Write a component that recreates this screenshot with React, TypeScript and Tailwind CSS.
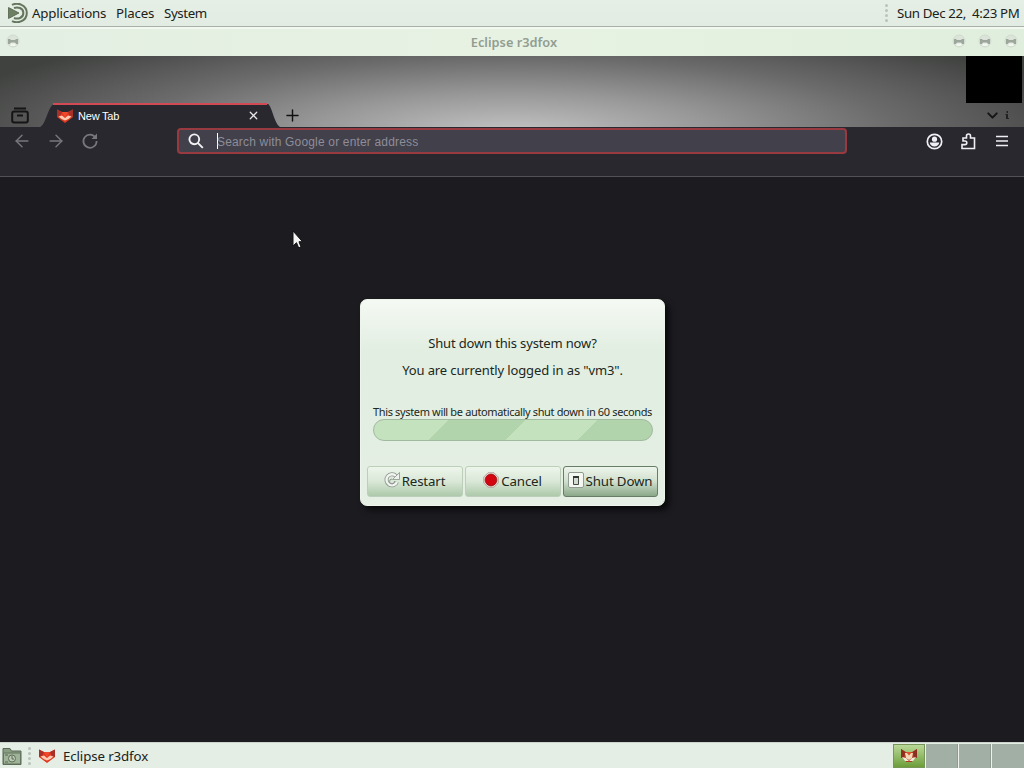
import React from 'react';
import { Plus, X, ChevronDown, ArrowLeft, ArrowRight } from 'lucide-react';

const FoxIcon = ({ size = 16 }: { size?: number }) => (
  <svg width={size} height={size} viewBox="0 0 16 16" className="shrink-0">
    <path d="M0 1.500l5 2.500h6l5-2.500v7.500L8 15 0 9z" fill="#e0391f" />
    <path d="M0 1.500l5 2.500-2 4-3 1zM16 1.500l-5 2.500 2 4 3 1z" fill="#a83028" />
    <path d="M1.500 8.500L5 7.500l3 2.500 3-2.500 3.500 1-3 2.500L8 12.500 4.500 11z" fill="#ffc9b0" />
    <path d="M5 4h6L8 9.500z" fill="#f0492c" />
  </svg>
);

const TrayFoxIcon = () => (
  <svg width="18" height="16" viewBox="0 0 18 16" className="shrink-0">
    <path d="M1 1l5 3h6l5-3v8l-4 2-1 3H6l-1-3-4-2z" fill="#b23a24" />
    <path d="M1 1l4 3-1 5-3 1zM17 1l-4 3 1 5 3 1z" fill="#8c2f22" />
    <path d="M5 5h8l-1 5-3 2-3-2z" fill="#f1d9b8" />
    <path d="M2 9l4 1 3 3 3-3 4-1-3 4H5z" fill="#f4eadb" />
    <path d="M6 4h6l-3 3.500z" fill="#d9532e" />
  </svg>
);

const MateLogo = () => (
  <svg width="20" height="20" viewBox="0 0 20 20" fill="none" className="shrink-0">
    <path d="M4 1.900C7 .4 10.500.5 13.500 1.800a9 9 0 0 1 0 16.400C10.500 19.500 7 19.600 4 18.100" stroke="#64765d" strokeWidth="2" />
    <path d="M6 5C8 4.200 10 4.200 12 5a5.400 5.400 0 0 1 0 10C10 15.800 8 15.800 6 15" stroke="#64765d" strokeWidth="2" />
    <path d="M.5 4.500L11 10 .5 15.500z" fill="#6d8062" stroke="#50614a" strokeWidth=".8" />
  </svg>
);

const WindowDot = () => (
  <svg width="14" height="14" viewBox="0 0 14 14">
    <circle cx="7" cy="7" r="6" fill="#dce4da" stroke="#d0dace" />
    <path d="M2 5h2l1 1h4l1-1h2v5h-2L9 8.500H5L4 10H2z" fill="#9ca69b" />
    <path d="M4.500 9.500h5V12h-5z" fill="#f1f6ef" />
  </svg>
);

const Grip = () => (
  <div className="flex w-1 flex-col gap-[2px]">
    {[0, 1, 2, 3].map(i => <span key={i} className="h-[3px] w-[3px] rounded-full bg-[#b9c3b9]" />)}
  </div>
);

const TopPanel = () => (
  <div className="flex h-[27px] items-center border-b border-[#a7b1a6] bg-linear-to-b from-[#e5efe5] to-[#e3ece2] pl-2 text-[13.3px] leading-none text-[#1b211b]">
    <MateLogo />
    <span className="ml-1 w-[84px] pt-0.5 tracking-[-0.18px]">Applications</span>
    <span className="w-[48px] pt-0.5 tracking-[-0.15px]">Places</span>
    <span className="pt-0.5 tracking-[-0.4px]">System</span>
    <div className="ml-auto flex items-center gap-2 pr-1">
      <Grip />
      <span className="w-[123px] whitespace-nowrap pt-0.5 tracking-[-0.37px]">Sun Dec 22,&nbsp; 4:23 PM</span>
    </div>
  </div>
);

const TitleBar = () => (
  <div className="flex h-[29px] items-center border-t-2 border-[#f2f8f0] bg-linear-to-r from-[#e3efe2] via-[#e7f2e3] to-[#e0efdd] px-1.5">
    <div className="flex w-[70px] pb-[3px]"><WindowDot /></div>
    <div className="flex-1 text-center text-[12.8px] font-semibold leading-none text-[#929d91]">Eclipse r3dfox</div>
    <div className="flex w-[66px] justify-between pb-[3px]">
      <WindowDot />
      <WindowDot />
      <WindowDot />
    </div>
  </div>
);

const TabStrip = () => (
  <div className="flex h-[71px] justify-between bg-[radial-gradient(ellipse_590px_115px_at_50%_108%,#c4c4c4_0%,#989898_34%,#6b6b6b_65%,#404240_100%)]">
    <div className="flex items-end">
      <div className="flex h-6 w-10 items-center pl-[11px]">
        <svg width="18" height="18" viewBox="0 0 18 18" fill="none" stroke="#141514" strokeWidth="2">
          <path d="M3 2.500h12M6 9.500h6" />
          <rect x="1.200" y="5.500" width="15.600" height="11" rx="2" />
        </svg>
      </div>
      <div className="relative flex h-6 w-[240px] items-center">
        <svg className="absolute inset-0" width="240" height="24" viewBox="0 0 240 24">
          <path d="M0 24C6 22 8 3 14 1h214c4 2 6 19 12 23z" fill="#29282f" />
          <path d="M13 1h214" stroke="#d24b54" strokeWidth="2" />
        </svg>
        <div className="relative flex w-full items-center pl-[17px] pr-[20px] pt-px font-['Liberation_Sans',sans-serif] text-[11px] text-white">
          <FoxIcon />
          <span className="ml-[5px] pt-px leading-none tracking-[-0.2px]">New Tab</span>
          <X className="ml-auto" size={13} strokeWidth={2.300} color="#e6e6ea" />
        </div>
      </div>
      <div className="flex h-6 items-center pl-[3px] pt-px"><Plus size={19} strokeWidth={1.800} color="#111" /></div>
    </div>
    <div className="mr-0.5 w-14">
      <div className="h-[47px] bg-black" />
      <div className="flex h-6 items-center justify-end gap-[4px] pr-3">
        <ChevronDown size={17} strokeWidth={2.800} color="#151515" />
        <svg width="5" height="10" viewBox="0 0 5 10"><path d="M1.500 1h1.500v2H1.500zM.5 4h2.500v4h1v1h-3V5H.5z" fill="#222" /></svg>
      </div>
    </div>
  </div>
);

const Toolbar = () => (
  <div className="flex h-[50px] items-start border-b border-[#515158] bg-[#29282f]">
    <div className="flex h-7 w-[177px] items-center gap-[14px] pl-3 text-[#77777d]">
      <ArrowLeft size={20} strokeWidth={1.700} />
      <ArrowRight size={20} strokeWidth={1.700} />
      <svg width="20" height="20" viewBox="0 0 20 20" fill="none" stroke="currentColor" strokeWidth="1.700">
        <path d="M15.500 6.500A6.600 6.600 0 1 0 16.600 10" />
        <path d="M17 2.500V8h-5.500z" fill="currentColor" stroke="none" />
      </svg>
    </div>
    <div className="mt-px flex h-[26px] w-[670px] items-center rounded-[4px] border-2 border-[#983a40] bg-[#41404b] pl-[9px]">
      <svg width="16" height="16" viewBox="0 0 16 16" fill="none" stroke="#f2f2f5" strokeWidth="1.900">
        <circle cx="6.300" cy="6.300" r="4.900" />
        <path d="M9.800 9.800l5 5" />
      </svg>
      <span className="ml-[13px] h-4 w-px bg-white" />
      <span className="-ml-px pt-0.5 font-['Liberation_Sans',sans-serif] text-[12px] leading-none tracking-[0.17px] text-[#8e8d98]">Search with Google or enter address</span>
    </div>
    <div className="ml-auto flex h-7 items-center gap-[17px] pr-[13px] text-[#f0f0f4]">
      <svg width="17" height="17" viewBox="0 0 17 17">
        <circle cx="8.500" cy="8.500" r="7.200" fill="none" stroke="currentColor" strokeWidth="1.700" />
        <circle cx="8.500" cy="6.200" r="2.600" fill="currentColor" />
        <path d="M3.800 9.500h9.400c0 2.200-2 4-4.700 4s-4.700-1.800-4.700-4z" fill="currentColor" />
      </svg>
      <svg width="17" height="17" viewBox="0 0 17 17" fill="none" stroke="currentColor" strokeWidth="1.600">
        <path d="M2 15.500h12.500V5h-4V3a2 2 0 0 0-4 0v2H3v3h2a1.800 1.800 0 0 1 0 3.600H2z" />
      </svg>
      <svg width="17" height="17" viewBox="0 0 17 17" stroke="currentColor" strokeWidth="1.600">
        <path d="M2 3.500h12M2 8h12M2 12.500h12" />
      </svg>
    </div>
  </div>
);

const RestartIcon = () => (
  <svg width="16" height="16" viewBox="0 0 16 16" fill="none" className="-mt-[3px] shrink-0">
    <path d="M12 4A5.500 5.500 0 1 0 13 10" stroke="#899389" strokeWidth="4" />
    <path d="M12 4A5.500 5.500 0 1 0 13 10" stroke="#f3f5f2" strokeWidth="2.400" />
    <path d="M15.500.5v7H8.500z" fill="#edf0ec" stroke="#899389" strokeWidth=".8" />
    <path d="M10.500 9a2.500 2.500 0 1 1-2.500-2" stroke="#929b92" />
  </svg>
);

const CancelIcon = () => (
  <svg width="16" height="16" viewBox="0 0 16 16" className="-mt-[3px] shrink-0">
    <path d="M5 .8h6L15.200 5v6L11 15.200H5L.8 11V5z" fill="#f5e7e3" stroke="#b39f99" />
    <circle cx="8" cy="8" r="5.900" fill="#d3060f" stroke="#8e1715" strokeWidth=".8" />
  </svg>
);

const ShutDownIcon = () => (
  <svg width="16" height="16" viewBox="0 0 16 16" className="-mt-[3px] shrink-0">
    <rect x=".5" y=".5" width="15" height="15" rx="1.500" fill="#f5f7f3" stroke="#8f9c8f" />
    <path d="M5.500 4.500h5v8h-5z" fill="#d5dbd2" stroke="#444b43" />
    <path d="M5 4h6v2H5z" fill="#323832" />
  </svg>
);

const buttons = [
  { label: 'Restart', icon: <RestartIcon />, focused: false },
  { label: 'Cancel', icon: <CancelIcon />, focused: false },
  { label: 'Shut Down', icon: <ShutDownIcon />, focused: true },
];

const ShutdownDialog = () => (
  <div className="absolute left-[360px] top-[299px] flex h-[207px] w-[305px] flex-col items-center rounded-[7px] border border-[#edf5eb] bg-linear-to-b from-[#f5f9f3] via-[#e2eee2] via-25% to-[#e5efe3] text-[#202720] shadow-[4px_4px_6px_0px_rgba(0,0,0,0.7)]">
    <p className="mt-[34px] text-[13px] leading-[18px] tracking-[-0.15px]">Shut down this system now?</p>
    <p className="mt-[9px] text-[13px] leading-[18px] tracking-[-0.12px]">You are currently logged in as "vm3".</p>
    <p className="mt-[25px] whitespace-nowrap text-[11px] leading-[15px] tracking-[-0.35px]">This system will be automatically shut down in 60 seconds</p>
    <div className="h-[22px] w-[280px] shrink-0 rounded-full border border-[#a1b99e] bg-[linear-gradient(135deg,#c5e2be_0_25%,#b1d4ac_25%_51%,#c5e2be_51%_75%,#b1d4ac_75%)]" />
    <div className="mr-px mt-[25px] flex gap-0.5">
      {buttons.map(b => (
        <button
          key={b.label}
          className={`flex h-[31px] items-center justify-center gap-[2px] whitespace-nowrap rounded-[3px] border text-[13.3px] leading-none tracking-[-0.15px] ${b.focused ? 'w-[95px] border-[#687c67] bg-linear-to-b from-[#edf4eb] via-[#d0e0ce] to-[#8ba889]' : 'w-24 border-[#bdcfbb] bg-linear-to-b from-[#edf5eb] via-[#d9e8d7] to-[#adc9aa]'}`}
        >
          {b.icon}
          <span>{b.label}</span>
        </button>
      ))}
    </div>
  </div>
);

const Taskbar = () => (
  <div className="flex h-[26px] items-center border-t border-[#cad4ca] bg-[#e4eee4] pt-px">
    <svg className="ml-0.5" width="20" height="19" viewBox="0 0 20 19">
      <path d="M1 4V1.500h7L9.500 4H19v13.500H1z" fill="#899d83" stroke="#586955" />
      <path d="M1.500 6h17v11h-17z" fill="#9fb398" stroke="#62745d" />
      <circle cx="10" cy="11.500" r="3.500" fill="#bdcbb7" stroke="#5d7059" />
      <path d="M10 9v3h2M3 8h3M3 15h3" stroke="#566751" fill="none" />
    </svg>
    <div className="ml-[6px]"><Grip /></div>
    <div className="ml-[7px] flex items-center gap-2 text-[13.3px] leading-none text-[#1b211b]">
      <FoxIcon />
      <span className="pt-px tracking-[-0.12px]">Eclipse r3dfox</span>
    </div>
    <div className="ml-auto flex h-full gap-px bg-[#edf3ec]">
      <div className="flex w-8 items-center justify-center border border-[#78965a] bg-linear-to-b from-[#bad997] to-[#6d9e39]">
        <TrayFoxIcon />
      </div>
      <div className="w-8 border-r border-[#8f9b90] bg-[#a2afa5]" />
      <div className="w-8 border-r border-[#8f9b90] bg-[#a2afa5]" />
      <div className="w-8 bg-[#a2afa5]" />
    </div>
  </div>
);

const Cursor = () => (
  <svg className="absolute left-[292px] top-[230px]" width="13" height="20" viewBox="0 0 13 20">
    <path d="M1 1v15l3.500-3.300L6.700 18l2.200-1.200L7 11.700h3.500z" fill="#f4f4f4" stroke="#111" strokeWidth="1" />
  </svg>
);

const App: React.FC = () => (
  <div className="relative flex h-[768px] w-[1024px] flex-col overflow-hidden bg-[#1c1b20] font-['Noto_Sans',sans-serif]">
    <TopPanel />
    <TitleBar />
    <TabStrip />
    <Toolbar />
    <main className="flex-1 bg-[#1c1b20]" />
    <Taskbar />
    <Cursor />
    <ShutdownDialog />
  </div>
);

export default App;
